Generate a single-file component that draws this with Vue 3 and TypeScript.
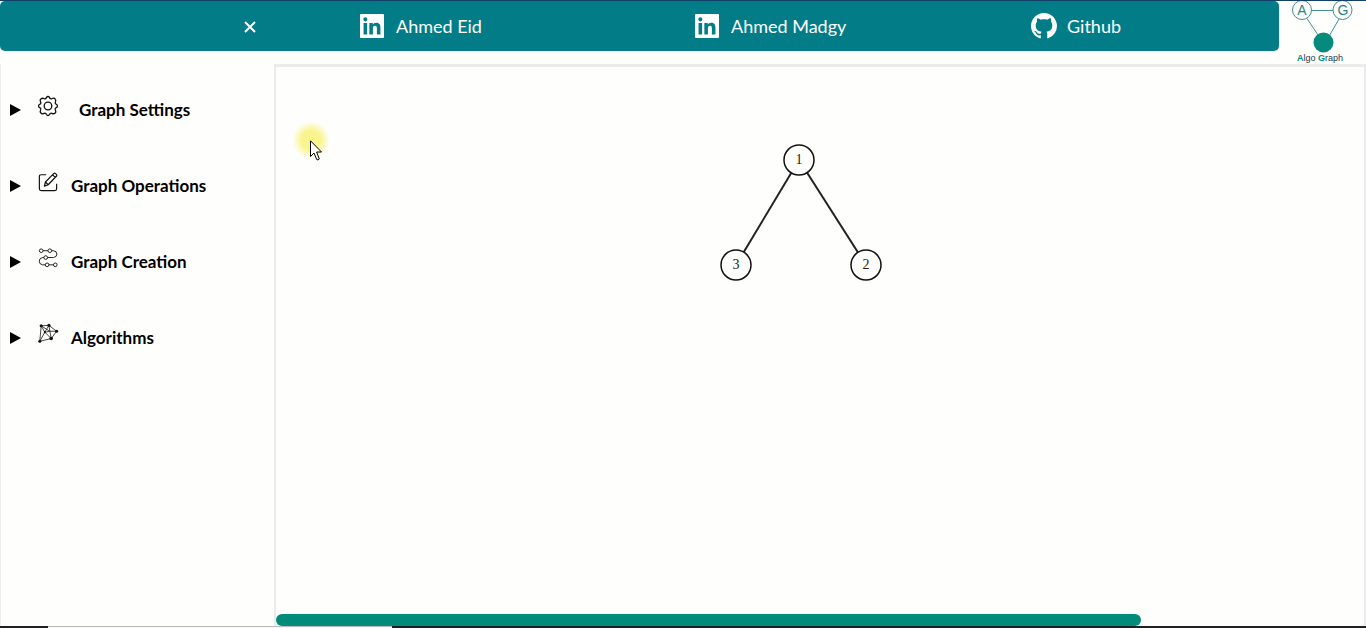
<script setup lang="ts">
import { ref } from 'vue'

interface GraphNode {
  id: number
  x: number
  y: number
}

const profiles = [
  { label: 'Ahmed Eid', icon: 'linkedin', href: '#eid' },
  { label: 'Ahmed Madgy', icon: 'linkedin', href: '#madgy' },
  { label: 'Github', icon: 'github', href: '#github' },
]

const sections = [
  { label: 'Graph Settings', icon: 'gear', spaced: true },
  { label: 'Graph Operations', icon: 'edit', spaced: false },
  { label: 'Graph Creation', icon: 'flow', spaced: false },
  { label: 'Algorithms', icon: 'mesh', spaced: false },
]

const nodes: GraphNode[] = [
  { id: 1, x: 523, y: 93 },
  { id: 2, x: 590, y: 198 },
  { id: 3, x: 460, y: 198 },
]

const edges = [
  { from: nodes[0], to: nodes[1] },
  { from: nodes[0], to: nodes[2] },
]

const sidebarOpen = ref(true)
</script>

<template>
  <div class="app">
    <header class="header">
      <nav class="nav">
        <div class="nav-start">
          <button class="close" type="button" aria-label="Toggle menu" @click="sidebarOpen = !sidebarOpen">
            <svg width="14" height="14" viewBox="0 0 14 14"><path d="M2 2 12 12M12 2 2 12" /></svg>
          </button>
        </div>
        <a v-for="p in profiles" :key="p.label" class="profile" :href="p.href">
          <svg v-if="p.icon === 'linkedin'" class="brand" width="24" height="24" viewBox="0 0 24 24">
            <path d="M20.447 20.452h-3.554v-5.569c0-1.328-.027-3.037-1.852-3.037-1.853 0-2.136 1.445-2.136 2.939v5.667H9.351V9h3.414v1.561h.046c.477-.9 1.637-1.850 3.370-1.850 3.601 0 4.267 2.370 4.267 5.455v6.286zM5.337 7.433a2.062 2.062 0 1 1 0-4.125 2.062 2.062 0 0 1 0 4.125zM7.119 20.452H3.555V9h3.564v11.452zM23 0H1Q0 0 0 1V23Q0 24 1 24H23Q24 24 24 23V1Q24 0 23 0z" />
          </svg>
          <svg v-else class="brand github" width="26" height="26" viewBox="0 0 16 16">
            <path d="M8 0C3.580 0 0 3.580 0 8c0 3.540 2.290 6.530 5.470 7.590.4.070.55-.17.55-.38 0-.19-.01-.82-.01-1.490-2.010.37-2.530-.49-2.690-.94-.09-.23-.48-.94-.82-1.130-.28-.15-.68-.52-.01-.53.63-.01 1.080.58 1.230.82.72 1.210 1.870.87 2.330.66.070-.52.28-.87.51-1.070-1.780-.2-3.640-.89-3.640-3.950 0-.87.31-1.590.82-2.150-.08-.2-.36-1.020.08-2.120 0 0 .67-.21 2.200.82.64-.18 1.320-.27 2-.27s1.360.09 2 .27c1.530-1.040 2.200-.82 2.200-.82.44 1.100.16 1.920.08 2.120.51.56.82 1.270.82 2.150 0 3.070-1.870 3.750-3.650 3.950.29.25.54.73.54 1.480 0 1.070-.01 1.930-.01 2.200 0 .21.15.46.55.38A8.010 8.010 0 0 0 16 8c0-4.420-3.580-8-8-8z" />
          </svg>
          <span>{{ p.label }}</span>
        </a>
      </nav>
      <svg class="logo" width="87" height="63" viewBox="0 0 87 63" role="img" aria-label="Algo Graph">
        <g fill="none" stroke="#3f918f" stroke-width="1">
          <path d="M32.500 9.500H54M28 17.500 41 37M60 18 49 37" />
          <circle cx="23" cy="9" r="9.500" />
          <circle cx="63.500" cy="9" r="9.500" />
        </g>
        <circle cx="44.500" cy="41.500" r="10" fill="#058a7b" />
        <text x="23" y="14" font-size="14" text-anchor="middle" fill="#2b8586">A</text>
        <text x="64" y="14" font-size="14" text-anchor="middle" fill="#2b8586">G</text>
        <text x="41" y="60" font-size="9" text-anchor="middle" class="word"><tspan class="cap">A</tspan>lgo <tspan class="cap">G</tspan>raph</text>
      </svg>
    </header>

    <main class="main">
      <aside v-if="sidebarOpen" class="sidebar">
        <details v-for="s in sections" :key="s.label">
          <summary :class="{ spaced: s.spaced }">
            <svg class="marker" width="12" height="12" viewBox="0 0 12 12"><path d="M0 0 11 6 0 12Z" /></svg>
            <svg v-if="s.icon === 'gear'" class="icon" width="20" height="20" viewBox="0 0 20 20">
              <path d="M8.300 1.700Q10-.7 11.700 1.700Q12.200 3.300 13.800 2.700Q16.700 1.500 17.200 3.200Q18.300 4.300 17.300 6.200Q16.800 7.800 18.300 8.300Q20.700 10 18.300 11.700Q16.700 12.200 17.300 13.800Q18.500 16.700 16.800 17.200Q15.700 18.300 13.800 17.300Q12.200 16.800 11.700 18.300Q10 20.700 8.300 18.300Q7.800 16.700 6.200 17.300Q3.300 18.500 2.800 16.800Q1.700 15.700 2.700 13.800Q3.200 12.200 1.700 11.700Q-.7 10 1.700 8.300Q3.300 7.800 2.700 6.200Q1.500 3.300 3.200 2.800Q4.300 1.700 6.200 2.700Q7.800 3.200 8.300 1.700Z" />
              <circle cx="10" cy="10" r="3.800" />
            </svg>
            <svg v-else-if="s.icon === 'edit'" class="icon" width="20" height="20" viewBox="0 0 22 22">
              <path d="M9 3H3.500Q1.500 3 1.500 5V18.500Q1.500 20.500 3.500 20.500H18.500Q20.500 20.500 20.500 18.500V13M7 15.500 8.200 11 17.200 1.800Q18.200.8 19.300 1.800L20.200 2.700Q21.200 3.700 20.200 4.700L11.200 14ZM16 3 19 6M8.200 11 11.200 14" />
            </svg>
            <svg v-else-if="s.icon === 'flow'" class="icon fine" width="20" height="20" viewBox="0 0 22 22">
              <circle cx="3.500" cy="3" r="2" /><circle cx="13" cy="3" r="2" /><circle cx="8.500" cy="10.500" r="2" />
              <circle cx="10" cy="18.500" r="2" /><circle cx="19" cy="18.500" r="2" />
              <path d="M5.500 3h5.500M15 3h2q3.800.4 3.800 3.700T17 10.500h-6.500M6.500 10.500H5q-3.600.4-3.600 4T5 18.500h3M12 18.500h5" />
            </svg>
            <svg v-else class="icon fine mesh" width="20" height="20" viewBox="0 0 22 22">
              <path d="M3.500 2 12 1.500 20.500 8 14.500 16 2 19ZM3.500 2 7.500 9 2 19M12 1.500 7.500 9 14.500 16 12 1.500M3.500 2 13 8 20.500 8M7.500 9 13 8" />
              <g class="dots"><circle cx="3.500" cy="2" r="1.700" /><circle cx="12" cy="1.500" r="1.700" /><circle cx="20.500" cy="8" r="1.700" /><circle cx="14.500" cy="16" r="2" /><circle cx="2" cy="19" r="1.700" /><circle cx="7.500" cy="9" r="1.200" /></g>
            </svg>
            <span>{{ s.label }}</span>
          </summary>
        </details>
      </aside>

      <section class="stage">
        <svg class="graph" width="100%" height="400" role="img" aria-label="Graph">
          <line v-for="e in edges" :key="e.to.id" :x1="e.from.x" :y1="e.from.y" :x2="e.to.x" :y2="e.to.y" />
          <g v-for="n in nodes" :key="n.id">
            <circle :cx="n.x" :cy="n.y" r="15" />
            <text :x="n.x" :y="n.y + 4">{{ n.id }}</text>
          </g>
        </svg>
        <div class="scroll-thumb"></div>
        <div class="pointer">
          <svg width="12" height="21" viewBox="0 0 12 21"><path d="M.5.8V16.500L4 13 6.700 19.500Q8 20.700 9.300 19L6.600 12H11.500Z" /></svg>
        </div>
      </section>
    </main>

    <footer class="taskline"><span class="status"></span></footer>
  </div>
</template>

<style>
body {
  margin: 0;
  background: #fefefc;
}
</style>

<style scoped>
.app {
  display: flex;
  flex-direction: column;
  box-sizing: border-box;
  height: 100vh;
  overflow: hidden;
  border-top: 1px solid #123f68;
  font-family: Lato, "Open Sans", sans-serif;
  color: #000;
}
.header {
  display: flex;
  align-items: flex-start;
  height: 63px;
  flex: none;
}
.nav {
  flex: 1;
  display: grid;
  grid-template-columns: 360fr 335fr 336fr 248fr;
  height: 50px;
  border-radius: 5px;
  background: #027d87;
}
.nav-start {
  display: flex;
  justify-content: flex-end;
  align-items: center;
  padding: 2px 103px 0 0;
}
.close {
  display: flex;
  padding: 0;
  border: 0;
  background: none;
  cursor: pointer;
}
.close path {
  stroke: #fff;
  stroke-width: 2px;
}
.profile {
  display: flex;
  align-items: center;
  gap: 12px;
  color: #fff;
  font-size: 18px;
  line-height: 24px;
  text-decoration: none;
}
.brand {
  fill: #fff;
}
.github {
  margin-right: -2px;
}
.logo {
  flex: none;
  font-family: "Liberation Sans", Arial, sans-serif;
}
.word {
  fill: #26384d;
}
.cap {
  fill: #058a7b;
  font-weight: bold;
}
.main {
  flex: 1;
  display: flex;
  min-height: 0;
}
.sidebar {
  box-sizing: border-box;
  width: 274px;
  flex: none;
  padding-top: 8px;
  border-left: 1px solid #ededeb;
}
summary {
  display: flex;
  align-items: center;
  height: 76px;
  padding-left: 9px;
  list-style: none;
  font-size: 17px;
  line-height: 24px;
  font-weight: bold;
  cursor: pointer;
}
summary::-webkit-details-marker {
  display: none;
}
.marker {
  margin-right: 16px;
}
.icon {
  margin: 0 13px 8px 0;
  fill: none;
  stroke: #111;
  stroke-width: 1.300;
  stroke-linejoin: round;
  overflow: visible;
}
.spaced .icon {
  margin-right: 21px;
}
.fine {
  stroke-width: 1px;
}
.mesh {
  stroke: #333;
}
.dots {
  fill: #111;
  stroke: none;
}
.stage {
  position: relative;
  flex: 1;
  display: flex;
  flex-direction: column;
  justify-content: space-between;
  min-width: 0;
  border: solid #ebebeb;
  border-width: 3px 2px 0;
}
.graph {
  display: block;
}
.graph line {
  stroke: #222;
  stroke-width: 2px;
}
.graph circle {
  fill: #fefefc;
  stroke: #111;
  stroke-width: 1.500;
}
.graph text {
  font: 14px "Liberation Serif", "Times New Roman", serif;
  text-anchor: middle;
  fill: #222;
}
.scroll-thumb {
  width: 79.500%;
  height: 12px;
  border-radius: 6px;
  background: #028b7b;
}
.pointer {
  position: absolute;
  left: 16px;
  top: 54px;
  width: 38px;
  height: 38px;
  border-radius: 50%;
  background: radial-gradient(circle, #faf487 0, #faf48f 35%, #fefefc 70%);
}
.pointer svg {
  position: absolute;
  left: 18px;
  top: 19px;
  fill: #fff;
  stroke: #000;
}
.taskline {
  display: flex;
  flex: none;
  height: 2px;
  padding-left: 48px;
  background: #202020;
}
.status {
  box-sizing: border-box;
  width: 344px;
  border-top: 1px solid #bcbcbc;
  background: #f6f6f4;
}
</style>
